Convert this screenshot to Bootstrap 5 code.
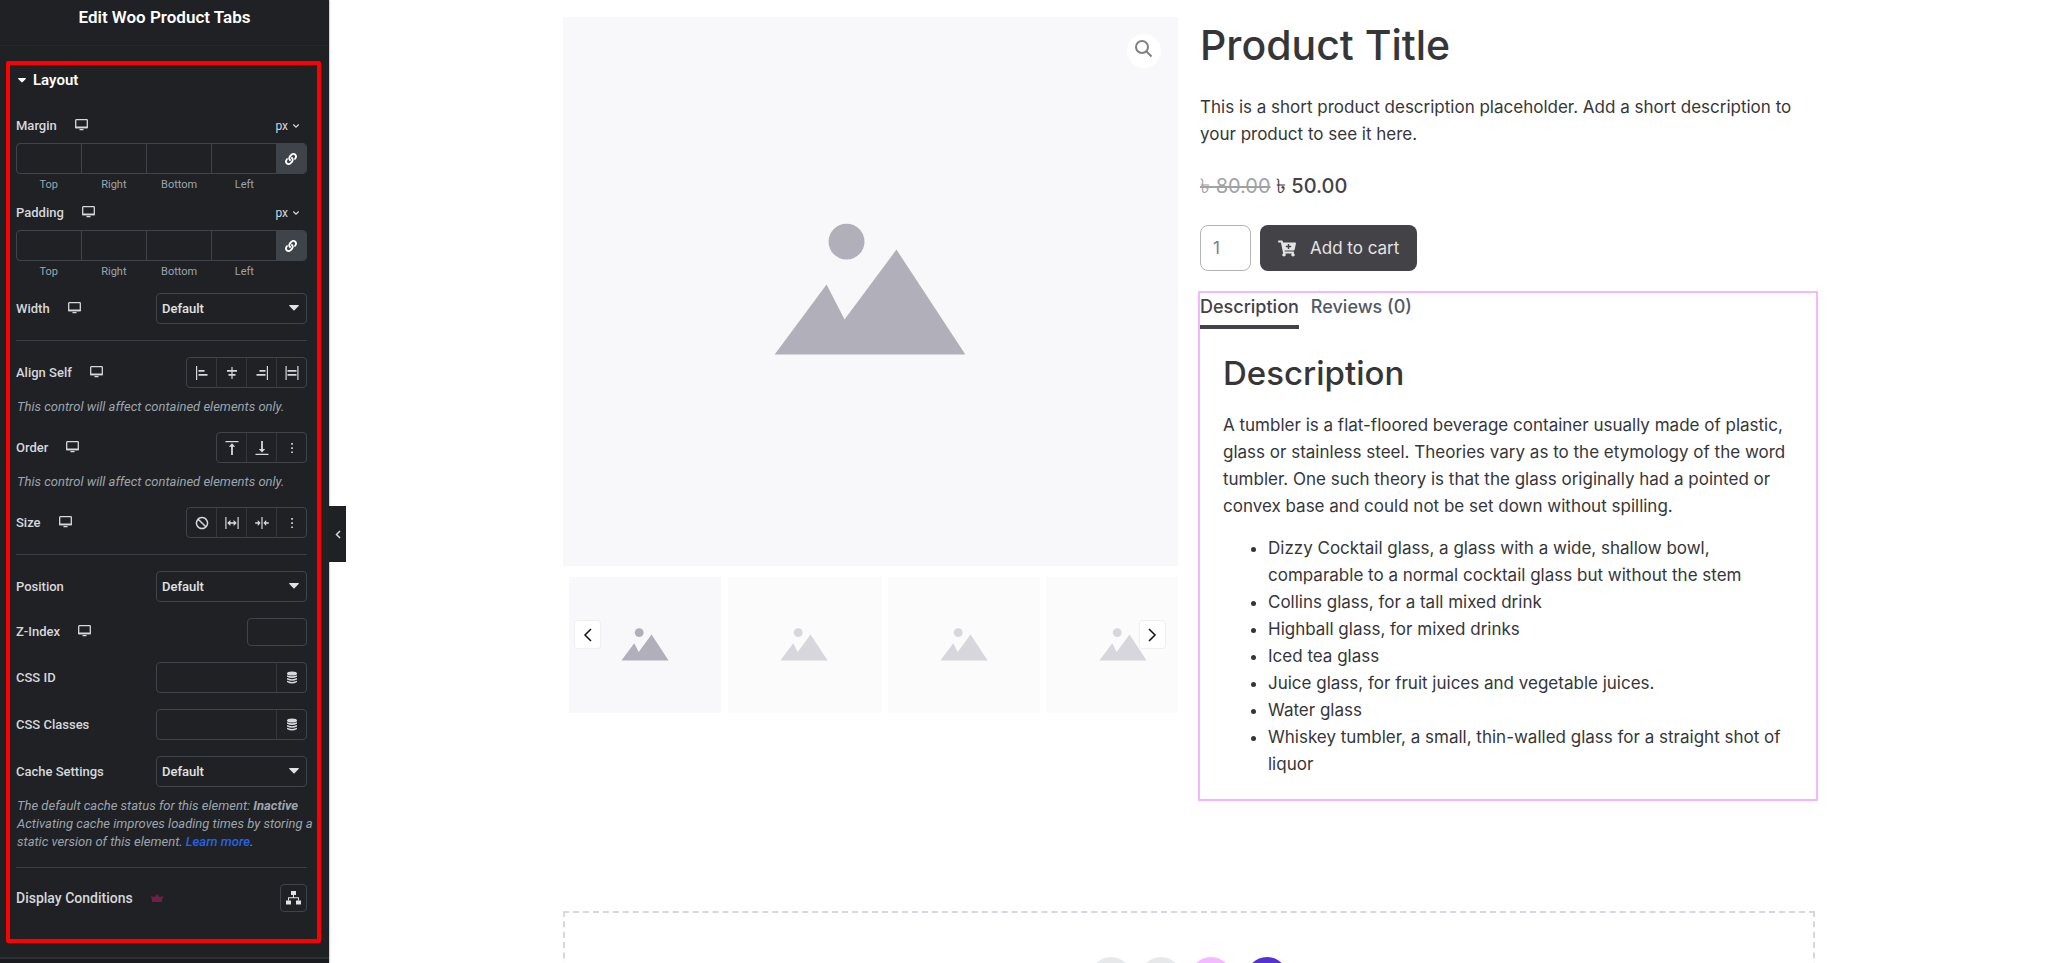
<!DOCTYPE html>
<html lang="en">
<head>
<meta charset="utf-8">
<meta name="viewport" content="width=device-width, initial-scale=1">
<title>Edit Woo Product Tabs</title>
<link href="https://cdn.jsdelivr.net/npm/bootstrap@5.3.0/dist/css/bootstrap.min.css" rel="stylesheet">
<style>
body{font-family:Inter,"Noto Sans",sans-serif;font-size:17px;line-height:27px;color:#363639;background:#fff}
.app{height:100vh;overflow:hidden}
.panel{flex:0 0 329px;width:329px;min-width:0;background:#1f2124;color:#d5d8dc;font-family:Roboto,sans-serif;font-size:13px;font-weight:500;line-height:18px;box-shadow:0 0 2px rgba(0,0,0,.5);position:relative;z-index:1}
.panel-title{height:46px;padding-top:6px;line-height:22px;font-size:17px;font-weight:600;color:#fff;border-bottom:1px solid #26292c}
.outlined{margin:15px 8px 14px 6px;border:4px solid #f00;padding:6px 10px 27px 6px;border-radius:2px}
.section-head{color:#fff;font-weight:600;font-size:15px;background:none;border:0;padding:0 0 0 2px;height:18px;gap:7px;margin-bottom:28px}
.outlined svg{display:block;fill:currentColor}
.lbl{gap:18px}
.lbl svg{margin-top:-2px}
.lbl.large{font-size:14px}
.unit{background:none;border:0;padding:0 7px 0 0;color:inherit;font-size:12px;gap:4px;line-height:18px}
.dims{height:31px;border:1px solid #3f444b;border-radius:4px;overflow:hidden}
.dims input,.fld{background:transparent;border:0;color:#d5d8dc;width:0;min-width:0;outline:0}
.dims input{flex:1 1 0;border-right:1px solid #3f444b;padding:0 4px}
.dims input:nth-of-type(4){border-right:0}
.dims button{flex:0 0 30px;background:#3f444b;border:0;color:#fff;padding:0}
.dim-names{padding-right:30px;font-size:11px;font-weight:400;line-height:14px;color:#9da5ae;text-align:center;margin:4px 0 12px}
.dim-names label{flex:1 1 0}
.ctl{height:31px;border:1px solid #3f444b;border-radius:4px;background:transparent;color:#e0e3e6;overflow:hidden}
.sel{width:151px;position:relative}
.sel select{appearance:none;width:100%;height:100%;background:transparent;border:0;color:inherit;font-weight:500;padding:0 5px;outline:0}
.sel svg{position:absolute;right:7px;top:11px;pointer-events:none}
.ctl button{width:30px;border:0;border-left:1px solid #33373c;background:none;color:#d5d8dc;padding:0}
.ctl.grp button:first-child{border-left:0;width:29px}
.short{width:60px;height:28px}
.square{width:27px;height:28px}
.crown{color:#6e2148}
.rule{height:1px;background:#3a3f45}
.spaced{margin-top:14px}
.note{font-size:13px;font-style:italic;font-weight:400;color:#9da5ae;line-height:18px;margin:10px -8px 0 0;padding-left:1px}
.note a{color:#2563eb;font-weight:500;text-decoration:none}
.foot{height:6px;background:#1a1b1e;border-top:2px solid #2d3034}
.toggle{position:absolute;left:100%;top:506px;width:17px;height:56px;background:#1f2124;border:0;color:#d5d8dc;padding:0}
.canvas{padding:17px 0 0 1px;min-width:0}
.page{max-width:1252px;margin:0 auto}
.product{display:grid;grid-template-columns:minmax(0,1fr) minmax(0,1fr);column-gap:22px;align-items:start}
.shot{background:#f8f8fa}
.shot>svg,.thumb svg{display:block;width:100%;height:auto}
.zoomer{position:absolute;right:17px;top:17px;width:34px;height:34px;border:0;border-radius:50%;background:#fff;padding:0}
.zoomer svg{display:block}
.thumbs{margin-top:11px;padding-left:6px;gap:7px;overflow:hidden}
.thumb{flex:0 0 25%;background:#f8f8fa}
.thumb.dim{opacity:.5}
.arrow{position:absolute;top:43px;width:27px;height:29px;background:#fff;border:1px solid #f0f0f3;border-radius:3px;padding:0}
.arrow.prev{left:11px}.arrow.next{right:12px}
h1{font-size:41px;font-weight:500;line-height:56px;margin:0 0 21px}
h2{font-size:33px;font-weight:500;line-height:42px;margin:0 0 18px}
.summary p{margin:0}
.price{font-size:20px;line-height:27px;margin:25px 0;font-weight:500;color:#434247}
.price del{color:#a2a2a5;font-weight:400}
.price ins{text-decoration:none}
.buy{gap:9px}
.qty{width:51px;height:46px;border:1px solid #b4b4bc;border-radius:8px;padding:0 12px;color:#7c7c82;font-size:17px;appearance:textfield;-moz-appearance:textfield}
.qty::-webkit-inner-spin-button{appearance:none}
.cart{height:46px;background:#434247;color:#e4e4e6;border:0;border-radius:8px;padding:0 18px;gap:14px;font-size:17px}
.tabs-box{border:2px solid #f2b8fb;margin:20px -3px 0 -2px;padding:0 23px 21px}
.tabs{margin:0 -23px 23px -23px;gap:12px;font-size:18px;font-weight:500}
.tabs a{text-decoration:none;color:#515962;height:36px;line-height:28px}
.tabs a.active{color:#434247;border-bottom:4px solid #434247}
.tabs-box p{margin:0 0 15px}
.tabs-box ul{margin:0;padding-left:45px}
.drop{border:2px dashed #d5d8dc;height:120px;margin-top:110px;padding-top:44px;gap:8px}
.dot{width:42px;height:42px;border-radius:50%;border:0;background:#e6e8ea}
.dot.pink{background:#f3baff}
.dot.violet{background:#5531d0;margin-left:6px}
</style>
</head>
<body>
<svg width="0" height="0" class="position-absolute">
<symbol id="desk" viewBox="0 0 13 12"><path fill="none" stroke="currentColor" stroke-width="1.3" d="M1.3.7h10.4q.6 0 .6.6v7.400H.7V1.300Q.7.7 1.300.7z"/><path d="M.7 7.500h11.600v1.700H.7zM4.500 10h4v1.300h-4z"/></symbol>
<symbol id="caret" viewBox="0 0 10 6"><path d="M.6 0h8.800q.8.300.2 1L5.500 5.200q-.5.400-1 0L.4 1Q-.2.300.6 0z"/></symbol>
<symbol id="chev" viewBox="0 0 8 6"><path fill="none" stroke="currentColor" stroke-width="1.200" d="M1.300 1.500 4 4.200l2.700-2.700"/></symbol>
<symbol id="link" viewBox="0 0 512 512"><path d="M326.600 185.400c59.700 59.800 58.900 155.700.4 214.600-.1.100-.2.300-.4.400l-67.200 67.200c-59.300 59.300-155.700 59.300-215 0-59.300-59.300-59.300-155.700 0-215l37.100-37.100c9.800-9.800 26.800-3.300 27.300 10.600.6 17.700 3.800 35.500 9.700 52.700 2 5.800.6 12.300-3.800 16.600l-13.100 13.100c-28 28-28.900 73.700-1.200 102 28 28.600 74.100 28.700 102.300.5l67.200-67.200c28.200-28.200 28.100-73.800 0-101.800-3.700-3.700-7.400-6.600-10.300-8.600a16 16 0 0 1-6.900-12.600c-.4-10.600 3.300-21.500 11.700-29.900l21.100-21.100c5.500-5.500 14.200-6.200 20.600-1.700a152.500 152.500 0 0 1 20.500 17.300zM467.500 44.400c-59.300-59.300-155.700-59.300-215 0l-67.200 67.200-.4.400c-58.600 58.900-59.400 154.800.4 214.600a152.500 152.500 0 0 0 20.500 17.300c6.400 4.500 15.100 3.800 20.600-1.700l21.100-21.100c8.400-8.400 12.100-19.300 11.700-29.900a16 16 0 0 0-6.900-12.600c-2.900-2-6.600-4.900-10.300-8.600-28.100-28-28.200-73.600 0-101.800l67.200-67.200c28.200-28.200 74.300-28.100 102.300.5 27.800 28.300 26.900 73.900-1.200 102l-13.100 13.100c-4.400 4.400-5.800 10.800-3.800 16.600 5.900 17.200 9 35 9.700 52.700.5 13.900 17.500 20.400 27.300 10.600l37.100-37.100c59.300-59.300 59.300-155.700 0-215z"/></symbol>
<symbol id="db" viewBox="0 0 12 14"><ellipse cx="6" cy="2.500" rx="5" ry="2"/><path d="M1 4.200q5 2.300 10 0v1.500q-5 2.600-10 0zM1 7q5 2.300 10 0v1.500q-5 2.600-10 0zM1 9.800q5 2.300 10 0v1.300q-5 3-10 0z"/></symbol>
<symbol id="dots" viewBox="0 0 14 14"><path d="M6.200 2h1.700v1.700H6.200zM6.200 6.200h1.700v1.700H6.200zM6.200 10.400h1.700v1.700H6.200z"/></symbol>
<symbol id="pic" viewBox="0 0 616 550"><circle cx="284" cy="225" r="18"/><path d="m212 338 52-70 18 35 52-70 69 105z"/></symbol>
</svg>

<div class="app d-flex">
<aside class="panel">
  <div class="panel-title text-center">Edit Woo Product Tabs</div>
  <div class="outlined">
    <button class="section-head d-flex align-items-center"><svg width="8" height="5"><use href="#caret"/></svg>Layout</button>

    <div class="d-flex justify-content-between align-items-center">
      <label class="lbl d-flex align-items-center" for="mt">Margin <svg width="13" height="12"><use href="#desk"/></svg></label>
      <button class="unit d-flex align-items-center">px <svg width="8" height="6"><use href="#chev"/></svg></button>
    </div>
    <div class="dims d-flex mt-2"><input id="mt"><input id="mr"><input id="mb"><input id="ml"><button class="d-flex align-items-center justify-content-center" aria-label="Link values"><svg width="12" height="12"><use href="#link"/></svg></button></div>
    <div class="dim-names d-flex"><label for="mt">Top</label><label for="mr">Right</label><label for="mb">Bottom</label><label for="ml">Left</label></div>

    <div class="d-flex justify-content-between align-items-center">
      <label class="lbl d-flex align-items-center" for="pt">Padding <svg width="13" height="12"><use href="#desk"/></svg></label>
      <button class="unit d-flex align-items-center">px <svg width="8" height="6"><use href="#chev"/></svg></button>
    </div>
    <div class="dims d-flex mt-2"><input id="pt"><input id="pr"><input id="pb"><input id="pl"><button class="d-flex align-items-center justify-content-center" aria-label="Link values"><svg width="12" height="12"><use href="#link"/></svg></button></div>
    <div class="dim-names d-flex"><label for="pt">Top</label><label for="pr">Right</label><label for="pb">Bottom</label><label for="pl">Left</label></div>

    <div class="spaced d-flex justify-content-between align-items-center">
      <label class="lbl d-flex align-items-center" for="wd">Width <svg width="13" height="12"><use href="#desk"/></svg></label>
      <div class="ctl sel"><select id="wd"><option>Default</option></select><svg width="10" height="6"><use href="#caret"/></svg></div>
    </div>
    <div class="rule my-3"></div>

    <div class="d-flex justify-content-between align-items-center">
      <span class="lbl d-flex align-items-center">Align Self <svg width="13" height="12"><use href="#desk"/></svg></span>
      <div class="ctl grp d-flex" role="group" aria-label="Align Self">
        <button class="d-flex align-items-center justify-content-center" aria-label="Start"><svg width="14" height="14"><path d="M1 0h1.200v14H1zM3.500 4h6v1.800h-6zM3.500 8h9v1.800h-9z"/></svg></button>
        <button class="d-flex align-items-center justify-content-center" aria-label="Center"><svg width="14" height="14"><path d="M6.400 1h1.200v12H6.400zM2 4h10v1.800H2zM3.500 8h7v1.800h-7z"/></svg></button>
        <button class="d-flex align-items-center justify-content-center" aria-label="End"><svg width="14" height="14"><path d="M11.800 0H13v14h-1.200zM4.500 4h6v1.800h-6zM1.500 8h9v1.800h-9z"/></svg></button>
        <button class="d-flex align-items-center justify-content-center" aria-label="Stretch"><svg width="14" height="14"><path d="M.5 0h1.200v14H.5zM12.300 0h1.200v14h-1.200zM2.500 4h9v1.800h-9zM2.500 8h9v1.800h-9z"/></svg></button>
      </div>
    </div>
    <div class="note">This control will affect contained elements only.</div>

    <div class="d-flex justify-content-between align-items-center mt-3">
      <span class="lbl d-flex align-items-center">Order <svg width="13" height="12"><use href="#desk"/></svg></span>
      <div class="ctl grp d-flex" role="group" aria-label="Order">
        <button class="d-flex align-items-center justify-content-center" aria-label="First"><svg width="14" height="14"><path d="M.5 0h13v1.200H.5zM7 2.200l3.200 3.600H7.900V14H6.100V5.800H3.800z"/></svg></button>
        <button class="d-flex align-items-center justify-content-center" aria-label="Last"><svg width="14" height="14"><path d="M.5 12.800h13V14H.5zM7 11.500l3.200-3.600H7.900V0H6.100v7.900H3.800z"/></svg></button>
        <button class="d-flex align-items-center justify-content-center" aria-label="Custom"><svg width="14" height="14"><use href="#dots"/></svg></button>
      </div>
    </div>
    <div class="note">This control will affect contained elements only.</div>

    <div class="d-flex justify-content-between align-items-center mt-3">
      <span class="lbl d-flex align-items-center">Size <svg width="13" height="12"><use href="#desk"/></svg></span>
      <div class="ctl grp d-flex" role="group" aria-label="Size">
        <button class="d-flex align-items-center justify-content-center" aria-label="None"><svg width="14" height="14"><path fill="none" stroke="currentColor" stroke-width="1.500" d="M7 1.500a5.500 5.500 0 1 0 .01 0zM3.200 3.200l7.600 7.600"/></svg></button>
        <button class="d-flex align-items-center justify-content-center" aria-label="Grow"><svg width="14" height="14"><path d="M.3 1h1.200v12H.3zM12.500 1h1.200v12h-1.200zM2.200 7l3.200-3v2.200h3.200V4l3.200 3-3.200 3V7.800H5.400V10z"/></svg></button>
        <button class="d-flex align-items-center justify-content-center" aria-label="Shrink"><svg width="14" height="14"><path d="M6.400 1h1.200v12H6.400zM5.600 7 2.800 4v2.200H.2v1.600h2.600V10zM8.400 7l2.800-3v2.200h2.600v1.600h-2.600V10z"/></svg></button>
        <button class="d-flex align-items-center justify-content-center" aria-label="Custom"><svg width="14" height="14"><use href="#dots"/></svg></button>
      </div>
    </div>
    <div class="rule my-3"></div>

    <div class="d-flex flex-column gap-3">
      <div class="d-flex justify-content-between align-items-center">
        <label for="pos">Position</label>
        <div class="ctl sel"><select id="pos"><option>Default</option></select><svg width="10" height="6"><use href="#caret"/></svg></div>
      </div>
      <div class="d-flex justify-content-between align-items-center">
        <label class="lbl d-flex align-items-center" for="zi">Z-Index <svg width="13" height="12"><use href="#desk"/></svg></label>
        <input class="ctl short" id="zi">
      </div>
      <div class="d-flex justify-content-between align-items-center">
        <label for="cid">CSS ID</label>
        <div class="ctl sel d-flex"><input class="fld flex-fill" id="cid"><button class="d-flex align-items-center justify-content-center flex-shrink-0" aria-label="Dynamic tags"><svg class="position-static" width="12" height="14"><use href="#db"/></svg></button></div>
      </div>
      <div class="d-flex justify-content-between align-items-center">
        <label for="ccl">CSS Classes</label>
        <div class="ctl sel d-flex"><input class="fld flex-fill" id="ccl"><button class="d-flex align-items-center justify-content-center flex-shrink-0" aria-label="Dynamic tags"><svg class="position-static" width="12" height="14"><use href="#db"/></svg></button></div>
      </div>
      <div class="d-flex justify-content-between align-items-center">
        <label for="cs">Cache Settings</label>
        <div class="ctl sel"><select id="cs"><option>Default</option></select><svg width="10" height="6"><use href="#caret"/></svg></div>
      </div>
    </div>
    <div class="note">The default cache status for this element: <b>Inactive</b><br>Activating cache improves loading times by storing a static version of this element. <a href="#">Learn more</a>.</div>
    <div class="rule my-3"></div>
    <div class="d-flex justify-content-between align-items-center">
      <span class="lbl large d-flex align-items-center">Display Conditions <svg class="crown mt-0" width="12" height="8"><path d="M0 1.500l3 1.800L6 0l3 3.300 3-1.800L10.800 8H1.200z"/></svg></span>
      <button class="ctl square d-flex align-items-center justify-content-center p-0" aria-label="Display Conditions"><svg width="15" height="14"><path d="M5 0h5v4H5zM0 9.500h5v4H0zM10 9.500h5v4h-5z"/><path d="M7 4h1v2.300H7zM2 6.300h11v3.200h-1V7.300H3v2.200H2z"/></svg></button>
    </div>
  </div>
  <div class="foot"></div>
  <button class="toggle d-flex align-items-center justify-content-center" aria-label="Hide panel"><svg width="6" height="9"><path fill="none" stroke="currentColor" stroke-width="1.500" d="M5 1 1.500 4.500 5 8"/></svg></button>
</aside>

<main class="canvas flex-fill">
<div class="page">
  <div class="product">
    <div>
      <div class="shot position-relative">
        <svg viewBox="0 0 616 550" fill="#b1afba"><use href="#pic"/></svg>
        <button class="zoomer" aria-label="Zoom"><svg width="34" height="34" fill="none" stroke="#808084" stroke-width="2"><circle cx="15" cy="13" r="6"/><path d="m19.500 17.500 5 5"/></svg></button>
      </div>
      <div class="position-relative">
        <div class="thumbs d-flex">
          <div class="thumb"><svg viewBox="0 0 616 550" fill="#b1afba"><use href="#pic"/></svg></div>
          <div class="thumb dim"><svg viewBox="0 0 616 550" fill="#b1afba"><use href="#pic"/></svg></div>
          <div class="thumb dim"><svg viewBox="0 0 616 550" fill="#b1afba"><use href="#pic"/></svg></div>
          <div class="thumb dim"><svg viewBox="0 0 616 550" fill="#b1afba"><use href="#pic"/></svg></div>
        </div>
        <button class="arrow prev d-flex align-items-center justify-content-center" aria-label="Previous"><svg width="9" height="14" fill="none" stroke="#111" stroke-width="1.500"><path d="M8 1 2 7l6 6"/></svg></button>
        <button class="arrow next d-flex align-items-center justify-content-center" aria-label="Next"><svg width="9" height="14" fill="none" stroke="#111" stroke-width="1.500"><path d="m1 1 6 6-6 6"/></svg></button>
      </div>
    </div>
    <div class="summary">
      <h1>Product Title</h1>
      <p>This is a short product description placeholder. Add a short description to your product to see it here.</p>
      <div class="price"><del>৳ 80.00</del> <ins>৳ 50.00</ins></div>
      <div class="buy d-flex">
        <input class="qty" type="number" value="1" aria-label="Quantity">
        <button class="cart d-flex align-items-center"><svg width="18" height="17" viewBox="0 0 576 512" fill="currentColor"><path d="M504.700 320H211.600l6.500 32h268.400c15.400 0 26.800 14.300 23.400 29.300l-5.500 24.300c18.700 9.100 31.600 28.200 31.600 50.400 0 31.200-25.500 56.400-56.800 56-29.800-.4-54.400-24.600-55.200-54.400-.4-16.300 6.100-31 16.800-41.500H231.200c10.400 10.200 16.800 24.300 16.800 40 0 31.800-26.500 57.400-58.700 55.900-28.500-1.300-51.800-24.400-53.300-52.900-1.200-22 10.400-41.500 28.100-51.600L93.900 64H24C10.700 64 0 53.300 0 40V24C0 10.700 10.700 0 24 0h102.500c11.400 0 21.200 8 23.500 19.200l9.200 44.800H552c15.400 0 26.800 14.300 23.400 29.300l-47.300 208c-2.400 10.900-12.200 18.700-23.400 18.700zM408 168h-48v-40c0-8.800-7.200-16-16-16h-16c-8.800 0-16 7.200-16 16v40h-48c-8.800 0-16 7.200-16 16v16c0 8.800 7.200 16 16 16h48v40c0 8.800 7.200 16 16 16h16c8.800 0 16-7.200 16-16v-40h48c8.800 0 16-7.200 16-16v-16c0-8.800-7.200-16-16-16z"/></svg>Add to cart</button>
      </div>
      <div class="tabs-box">
        <nav class="tabs d-flex"><a class="active" href="#">Description</a><a href="#">Reviews (0)</a></nav>
        <h2>Description</h2>
        <p>A tumbler is a flat-floored beverage container usually made of plastic, glass or stainless steel. Theories vary as to the etymology of the word tumbler. One such theory is that the glass originally had a pointed or convex base and could not be set down without spilling.</p>
        <ul>
          <li>Dizzy Cocktail glass, a glass with a wide, shallow bowl, comparable to a normal cocktail glass but without the stem</li>
          <li>Collins glass, for a tall mixed drink</li>
          <li>Highball glass, for mixed drinks</li>
          <li>Iced tea glass</li>
          <li>Juice glass, for fruit juices and vegetable juices.</li>
          <li>Water glass</li>
          <li>Whiskey tumbler, a small, thin-walled glass for a straight shot of liquor</li>
        </ul>
      </div>
    </div>
  </div>
  <div class="drop d-flex justify-content-center">
    <button class="dot" aria-label="Add container"></button><button class="dot" aria-label="Add template"></button><button class="dot pink" aria-label="Add kit"></button><button class="dot violet" aria-label="Build with AI"></button>
  </div>
</div>
</main>
</div>
<script src="https://cdn.jsdelivr.net/npm/bootstrap@5.3.0/dist/js/bootstrap.bundle.min.js"></script>
</body>
</html>
